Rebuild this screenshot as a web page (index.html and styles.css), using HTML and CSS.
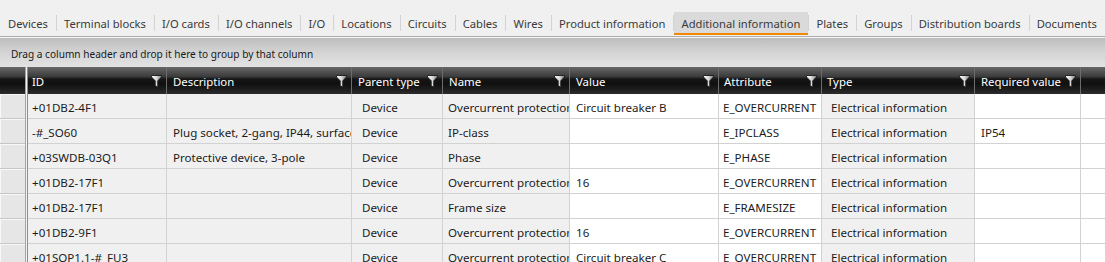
FILE: index.html
```html
<!DOCTYPE html>
<html>
<head>
<meta charset="utf-8">
<link rel="stylesheet" href="styles.css">
</head>
<body>
<div class="tabbar">
  <div class="tab">Devices</div><span class="sep"></span>
  <div class="tab">Terminal blocks</div><span class="sep"></span>
  <div class="tab">I/O cards</div><span class="sep"></span>
  <div class="tab">I/O channels</div><span class="sep"></span>
  <div class="tab">I/O</div><span class="sep"></span>
  <div class="tab">Locations</div><span class="sep"></span>
  <div class="tab">Circuits</div><span class="sep"></span>
  <div class="tab">Cables</div><span class="sep"></span>
  <div class="tab">Wires</div><span class="sep"></span>
  <div class="tab">Product information</div><span class="sep"></span>
  <div class="tab active">Additional information</div><span class="sep"></span>
  <div class="tab">Plates</div><span class="sep"></span>
  <div class="tab">Groups</div><span class="sep"></span>
  <div class="tab">Distribution boards</div><span class="sep"></span>
  <div class="tab">Documents</div>
</div>
<div class="grouppanel">Drag a column header and drop it here to group by that column</div>
<div class="grid" id="grid">
  <div class="divider"></div>
  <div class="hd gut"></div>
  <div class="hd c-id"><span>ID</span><svg class="flt" width="11" height="13" viewBox="0 0 11 13"><defs><linearGradient id="fg" x1="0" y1="0" x2="1" y2="0"><stop offset="0" stop-color="#ffffff"/><stop offset="0.5" stop-color="#d8d8d8"/><stop offset="1" stop-color="#7a7a7a"/></linearGradient></defs><path d="M0.5 0.5 H10.5 V2 L6.8 5.8 V12.3 L4.2 10.8 V5.8 L0.5 2 Z" fill="url(#fg)" stroke="#1a1a1a" stroke-width="0.9"/></svg></div>
  <div class="hd c-desc"><span>Description</span><svg class="flt" width="11" height="13" viewBox="0 0 11 13"><path d="M0.5 0.5 H10.5 V2 L6.8 5.8 V12.3 L4.2 10.8 V5.8 L0.5 2 Z" fill="url(#fg)" stroke="#1a1a1a" stroke-width="0.9"/></svg></div>
  <div class="hd c-par"><span>Parent type</span><svg class="flt" width="11" height="13" viewBox="0 0 11 13"><path d="M0.5 0.5 H10.5 V2 L6.8 5.8 V12.3 L4.2 10.8 V5.8 L0.5 2 Z" fill="url(#fg)" stroke="#1a1a1a" stroke-width="0.9"/></svg></div>
  <div class="hd c-name"><span>Name</span><svg class="flt" width="11" height="13" viewBox="0 0 11 13"><path d="M0.5 0.5 H10.5 V2 L6.8 5.8 V12.3 L4.2 10.8 V5.8 L0.5 2 Z" fill="url(#fg)" stroke="#1a1a1a" stroke-width="0.9"/></svg></div>
  <div class="hd c-val"><span>Value</span><svg class="flt" width="11" height="13" viewBox="0 0 11 13"><path d="M0.5 0.5 H10.5 V2 L6.8 5.8 V12.3 L4.2 10.8 V5.8 L0.5 2 Z" fill="url(#fg)" stroke="#1a1a1a" stroke-width="0.9"/></svg></div>
  <div class="hd c-attr"><span>Attribute</span><svg class="flt" width="11" height="13" viewBox="0 0 11 13"><path d="M0.5 0.5 H10.5 V2 L6.8 5.8 V12.3 L4.2 10.8 V5.8 L0.5 2 Z" fill="url(#fg)" stroke="#1a1a1a" stroke-width="0.9"/></svg></div>
  <div class="hd c-type"><span>Type</span><svg class="flt" width="11" height="13" viewBox="0 0 11 13"><path d="M0.5 0.5 H10.5 V2 L6.8 5.8 V12.3 L4.2 10.8 V5.8 L0.5 2 Z" fill="url(#fg)" stroke="#1a1a1a" stroke-width="0.9"/></svg></div>
  <div class="hd c-req"><span>Required value</span><svg class="flt" width="11" height="13" viewBox="0 0 11 13"><path d="M0.5 0.5 H10.5 V2 L6.8 5.8 V12.3 L4.2 10.8 V5.8 L0.5 2 Z" fill="url(#fg)" stroke="#1a1a1a" stroke-width="0.9"/></svg></div>
  <div class="hd c-fill"></div>

  <div class="cell gut"></div><div class="cell c-id">+01DB2-4F1</div><div class="cell c-desc"></div><div class="cell c-par">Device</div><div class="cell c-name">Overcurrent protection</div><div class="cell c-val">Circuit breaker B</div><div class="cell c-attr">E_OVERCURRENT</div><div class="cell c-type">Electrical information</div><div class="cell c-req"></div><div class="cell c-fill"></div>

  <div class="cell gut"></div><div class="cell c-id">-#_SO60</div><div class="cell c-desc">Plug socket, 2-gang, IP44, surface mounted</div><div class="cell c-par">Device</div><div class="cell c-name">IP-class</div><div class="cell c-val"></div><div class="cell c-attr">E_IPCLASS</div><div class="cell c-type">Electrical information</div><div class="cell c-req">IP54</div><div class="cell c-fill"></div>

  <div class="cell gut"></div><div class="cell c-id">+03SWDB-03Q1</div><div class="cell c-desc">Protective device, 3-pole</div><div class="cell c-par">Device</div><div class="cell c-name">Phase</div><div class="cell c-val"></div><div class="cell c-attr">E_PHASE</div><div class="cell c-type">Electrical information</div><div class="cell c-req"></div><div class="cell c-fill"></div>

  <div class="cell gut"></div><div class="cell c-id">+01DB2-17F1</div><div class="cell c-desc"></div><div class="cell c-par">Device</div><div class="cell c-name">Overcurrent protection</div><div class="cell c-val">16</div><div class="cell c-attr">E_OVERCURRENT</div><div class="cell c-type">Electrical information</div><div class="cell c-req"></div><div class="cell c-fill"></div>

  <div class="cell gut"></div><div class="cell c-id">+01DB2-17F1</div><div class="cell c-desc"></div><div class="cell c-par">Device</div><div class="cell c-name">Frame size</div><div class="cell c-val"></div><div class="cell c-attr">E_FRAMESIZE</div><div class="cell c-type">Electrical information</div><div class="cell c-req"></div><div class="cell c-fill"></div>

  <div class="cell gut"></div><div class="cell c-id">+01DB2-9F1</div><div class="cell c-desc"></div><div class="cell c-par">Device</div><div class="cell c-name">Overcurrent protection</div><div class="cell c-val">16</div><div class="cell c-attr">E_OVERCURRENT</div><div class="cell c-type">Electrical information</div><div class="cell c-req"></div><div class="cell c-fill"></div>

  <div class="cell gut"></div><div class="cell c-id">+01SOP1.1-#_FU3</div><div class="cell c-desc"></div><div class="cell c-par">Device</div><div class="cell c-name">Overcurrent protection</div><div class="cell c-val">Circuit breaker C</div><div class="cell c-attr">E_OVERCURRENT</div><div class="cell c-type">Electrical information</div><div class="cell c-req"></div><div class="cell c-fill"></div>
</div>
</body>
</html>
```

FILE: styles.css
```css
html, body {
  margin: 0;
  padding: 0;
  height: 262px;
  overflow: hidden;
  background: #f0f0f0;
  font-family: "Noto Sans", "DejaVu Sans", sans-serif;
}

.tabbar {
  display: flex;
  align-items: center;
  height: 37px;
  padding-top: 12px;
  box-sizing: border-box;
  border-bottom: 1px solid #acacac;
  background: #f0f0f0;
}
.tab {
  height: 23px;
  padding: 1px 8px 0 8px;
  box-sizing: border-box;
  display: flex;
  align-items: center;
  font-size: 11.2px;
  color: #3a3a3a;
  white-space: nowrap;
  margin-top: -2px;
}
.tab.active {
  background: #dadada;
  border-bottom: 2px solid #f28a00;
  padding-top: 3px;
}
.sep {
  width: 1px;
  height: 16px;
  background: #d3d3d3;
  margin-top: -2px;
}

.grouppanel {
  height: 30px;
  box-sizing: border-box;
  border-top: 1px solid #f6f6f6;
  background: linear-gradient(to bottom, #bdbdbd 0%, #d2d2d2 45%, #e3e3e3 100%);
  font-size: 10.1px;
  color: #1a1a1a;
  padding-left: 11px;
  display: flex;
  align-items: center;
  padding-top: 2px;
}

.grid {
  display: grid;
  grid-template-columns: 25px 3px 139px 185px 91px 127px 149px 103px 153px 106px 1fr;
  grid-template-rows: 27px repeat(7, 25px);
}
.divider {
  grid-column: 2;
  grid-row: 1 / span 8;
  background: linear-gradient(to right, #a4a4a4 0 1px, #f4f4f4 1px 2px, #8e8e8e 2px 3px);
}
.hd {
  background: linear-gradient(to bottom, #676767 0%, #4c4c4c 22%, #3a3a3a 36%, #161616 44%, #101010 62%, #1c1c1c 80%, #2c2c2c 100%);
  color: #ffffff;
  font-size: 11.4px;
  display: flex;
  align-items: center;
  justify-content: space-between;
  padding: 2px 4px 0 6px;
  box-sizing: border-box;
  border-right: 1px solid #6c6c6c;
  white-space: nowrap;
  overflow: hidden;
}
.hd.gut { grid-column: 1; border-right: none; }
.hd.c-id { padding-left: 4px; }
.hd.c-type { padding-left: 5px; }
.hd.c-attr { padding-left: 5px; }
.hd.c-fill { border-right: none; }
.flt { flex: none; margin-top: -1px; }

.cell {
  background: #f0f0f0;
  border-right: 1px solid #d2d2d2;
  border-bottom: 1px solid #d2d2d2;
  box-sizing: border-box;
  font-size: 11.6px;
  color: #1c1c1c;
  white-space: nowrap;
  overflow: hidden;
  display: flex;
  align-items: center;
  padding: 2px 0 0 6px;
}
.cell.gut {
  grid-column: 1;
  background: #e6e6e6;
  border-right: none;
  border-bottom: 1px solid #c6c6c6;
  box-shadow: inset 1px 1px 0 #f8f8f8;
  padding: 0;
}
.cell.c-id { padding-left: 4px; }
.cell.c-desc { padding-left: 6px; }
.cell.c-par { padding-left: 10px; }
.cell.c-name { padding-left: 5px; }
.cell.c-val { background: #ffffff; padding-left: 6px; }
.cell.c-attr { background: #ffffff; padding-left: 4px; }
.cell.c-type { padding-left: 9px; }
.cell.c-req { background: #ffffff; padding-left: 6px; }
.cell.c-fill { background: #ffffff; border-right: none; }
```
